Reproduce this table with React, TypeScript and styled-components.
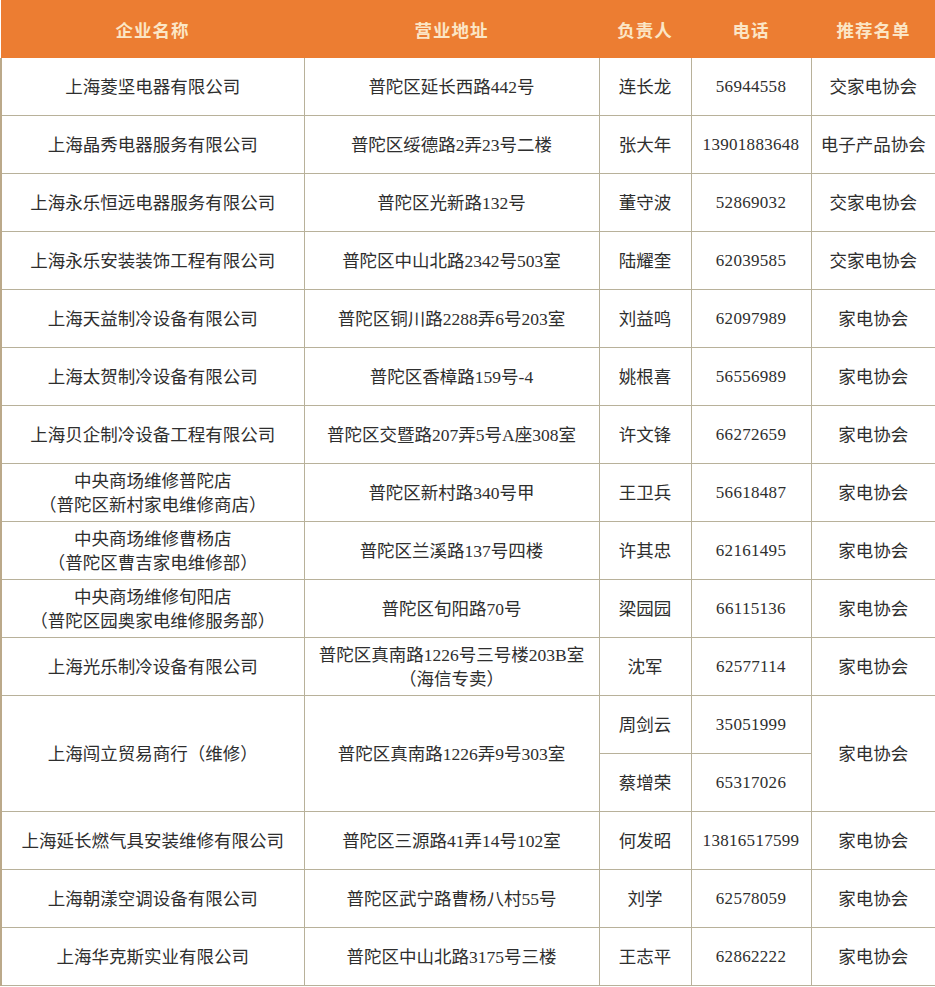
import styled, { createGlobalStyle } from "styled-components";

const Global = createGlobalStyle`
  html, body {
    margin: 0;
    padding: 0;
    background: #ffffff;
  }
`;

const Table = styled.table`
  width: 935px;
  border-collapse: collapse;
  table-layout: fixed;
  font-family: "Liberation Serif", "Noto Sans CJK SC", serif;
  color: #2e2e2e;
`;

const HeadCell = styled.th`
  height: 58px;
  padding: 0;
  background: #ec7d32;
  color: #fbe6c6;
  font-size: 17.5px;
  font-weight: 700;
  letter-spacing: 1px;
  text-align: center;
  vertical-align: middle;
`;

const Cell = styled.td<{ $tall?: boolean; $edge?: "left" | "right" }>`
  height: ${(p) => (p.$tall ? 115 : 57)}px;
  padding: 0 1px;
  border: 1px solid #b8b19a;
  border-top: none;
  font-size: 17.5px;
  line-height: 24px;
  text-align: center;
  vertical-align: middle;
  white-space: nowrap;
  overflow: hidden;
  ${(p) => (p.$edge === "left" ? "border-left: 2px solid #bba98a;" : "")}
  ${(p) => (p.$edge === "right" ? "border-right: 2px solid #e8dcc4;" : "")}
`;

const Num = styled.span`
  font-family: "Liberation Serif", serif;
  font-size: 17px;
  letter-spacing: 0.3px;
`;

type Row = {
  name: string[];
  addr: string[];
  person: string;
  phone: string;
  list: string;
};

const rows: Row[] = [
  { name: ["上海菱坚电器有限公司"], addr: ["普陀区延长西路442号"], person: "连长龙", phone: "56944558", list: "交家电协会" },
  { name: ["上海晶秀电器服务有限公司"], addr: ["普陀区绥德路2弄23号二楼"], person: "张大年", phone: "13901883648", list: "电子产品协会" },
  { name: ["上海永乐恒远电器服务有限公司"], addr: ["普陀区光新路132号"], person: "董守波", phone: "52869032", list: "交家电协会" },
  { name: ["上海永乐安装装饰工程有限公司"], addr: ["普陀区中山北路2342号503室"], person: "陆耀奎", phone: "62039585", list: "交家电协会" },
  { name: ["上海天益制冷设备有限公司"], addr: ["普陀区铜川路2288弄6号203室"], person: "刘益鸣", phone: "62097989", list: "家电协会" },
  { name: ["上海太贺制冷设备有限公司"], addr: ["普陀区香樟路159号-4"], person: "姚根喜", phone: "56556989", list: "家电协会" },
  { name: ["上海贝企制冷设备工程有限公司"], addr: ["普陀区交暨路207弄5号A座308室"], person: "许文锋", phone: "66272659", list: "家电协会" },
  { name: ["中央商场维修普陀店", "（普陀区新村家电维修商店）"], addr: ["普陀区新村路340号甲"], person: "王卫兵", phone: "56618487", list: "家电协会" },
  { name: ["中央商场维修曹杨店", "（普陀区曹吉家电维修部）"], addr: ["普陀区兰溪路137号四楼"], person: "许其忠", phone: "62161495", list: "家电协会" },
  { name: ["中央商场维修旬阳店", "（普陀区园奥家电维修服务部）"], addr: ["普陀区旬阳路70号"], person: "梁园园", phone: "66115136", list: "家电协会" },
  { name: ["上海光乐制冷设备有限公司"], addr: ["普陀区真南路1226号三号楼203B室", "（海信专卖）"], person: "沈军", phone: "62577114", list: "家电协会" },
];

const tail: Row[] = [
  { name: ["上海延长燃气具安装维修有限公司"], addr: ["普陀区三源路41弄14号102室"], person: "何发昭", phone: "13816517599", list: "家电协会" },
  { name: ["上海朝漾空调设备有限公司"], addr: ["普陀区武宁路曹杨八村55号"], person: "刘学", phone: "62578059", list: "家电协会" },
  { name: ["上海华克斯实业有限公司"], addr: ["普陀区中山北路3175号三楼"], person: "王志平", phone: "62862222", list: "家电协会" },
];

function Lines({ items }: { items: string[] }) {
  return (
    <>
      {items.map((t, i) => (
        <div key={i}>{t}</div>
      ))}
    </>
  );
}

function DataRow({ row }: { row: Row }) {
  return (
    <tr>
      <Cell $edge="left">
        <Lines items={row.name} />
      </Cell>
      <Cell>
        <Lines items={row.addr} />
      </Cell>
      <Cell>{row.person}</Cell>
      <Cell>
        <Num>{row.phone}</Num>
      </Cell>
      <Cell $edge="right">{row.list}</Cell>
    </tr>
  );
}

export default function App() {
  return (
    <>
      <Global />
      <Table>
        <colgroup>
          <col style={{ width: 303 }} />
          <col style={{ width: 295 }} />
          <col style={{ width: 92 }} />
          <col style={{ width: 120 }} />
          <col style={{ width: 125 }} />
        </colgroup>
        <thead>
          <tr>
            <HeadCell>企业名称</HeadCell>
            <HeadCell>营业地址</HeadCell>
            <HeadCell>负责人</HeadCell>
            <HeadCell>电话</HeadCell>
            <HeadCell>推荐名单</HeadCell>
          </tr>
        </thead>
        <tbody>
          {rows.map((r) => (
            <DataRow key={r.name[0]} row={r} />
          ))}
          <tr>
            <Cell rowSpan={2} $edge="left">上海闯立贸易商行（维修）</Cell>
            <Cell rowSpan={2}>普陀区真南路1226弄9号303室</Cell>
            <Cell>周剑云</Cell>
            <Cell>
              <Num>35051999</Num>
            </Cell>
            <Cell rowSpan={2} $edge="right">家电协会</Cell>
          </tr>
          <tr>
            <Cell>蔡增荣</Cell>
            <Cell>
              <Num>65317026</Num>
            </Cell>
          </tr>
          {tail.map((r) => (
            <DataRow key={r.name[0]} row={r} />
          ))}
        </tbody>
      </Table>
    </>
  );
}
